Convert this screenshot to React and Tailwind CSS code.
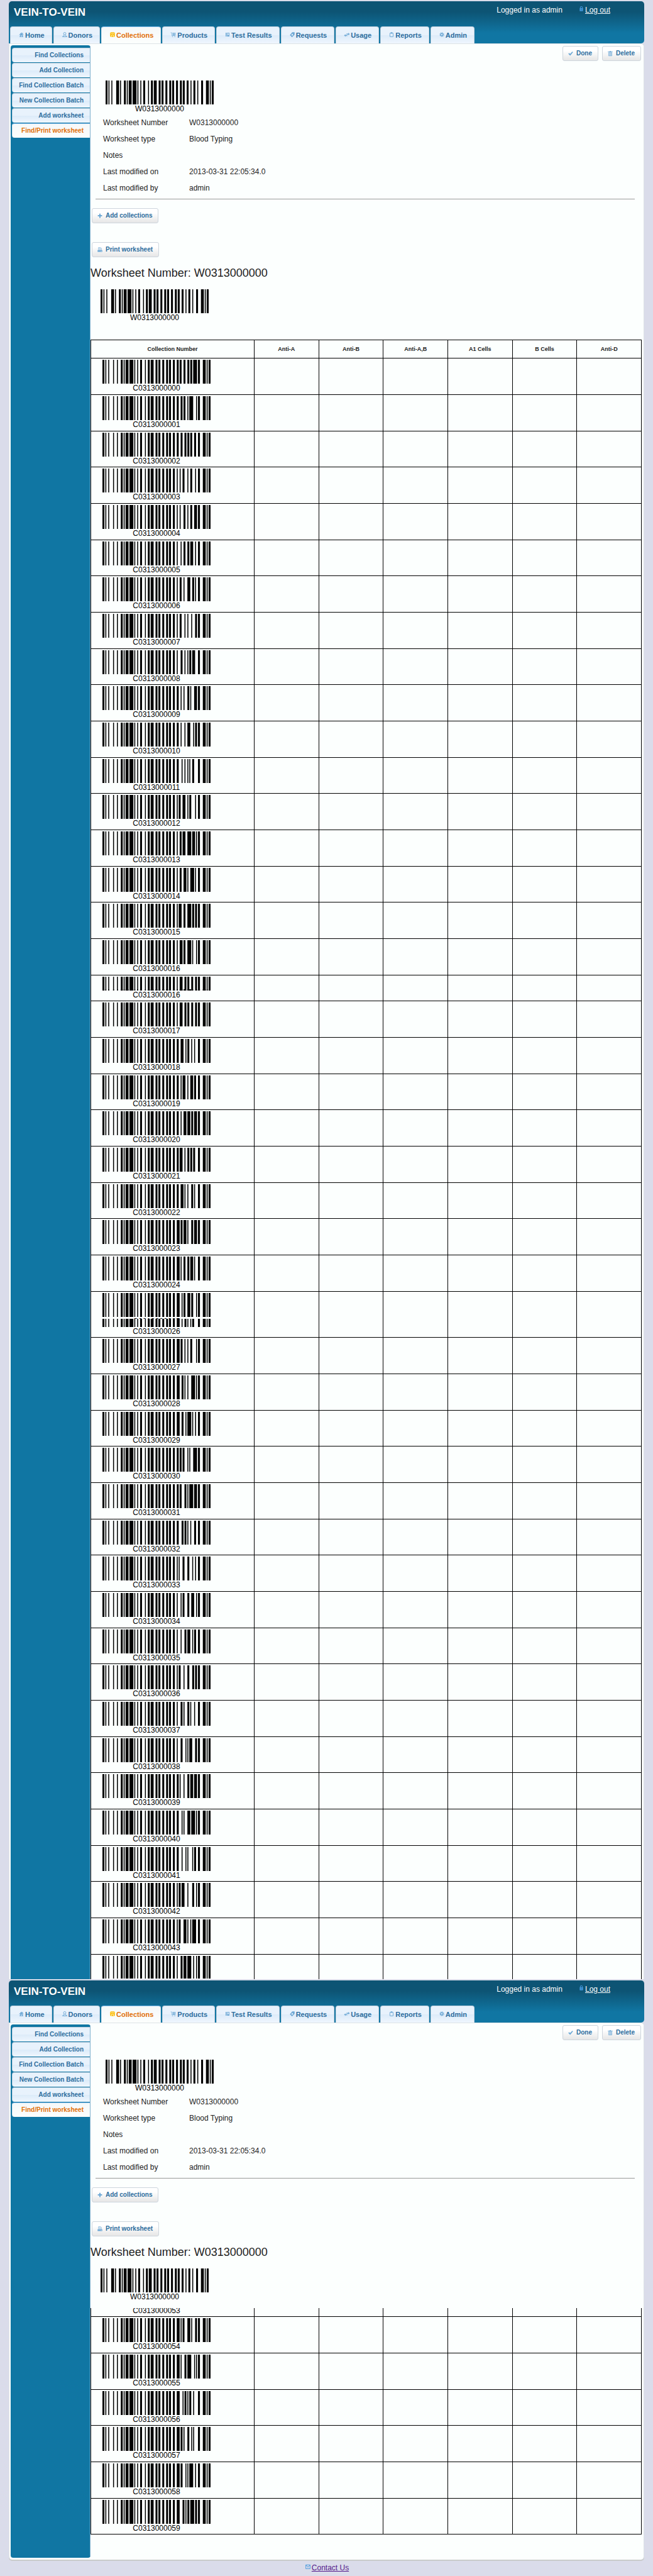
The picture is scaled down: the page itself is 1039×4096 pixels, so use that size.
import React from "react";

const CODE128 = (
  "212222,222122,222221,121223,121322,131222,122213,122312,132212,221213," +
  "221312,231212,112232,122132,122231,113222,123122,123221,223211,221132," +
  "221231,213212,223112,312131,311222,321122,321221,312212,322112,322211," +
  "212123,212321,232121,111323,131123,131321,112313,132113,132311,211313," +
  "231113,231311,112133,112331,132131,113123,113321,133121,313121,211331," +
  "231131,213113,213311,213131,311123,311321,331121,312113,312311,332111," +
  "314111,221411,431111,111224,111422,121124,121421,141122,141221,112214," +
  "112412,122114,122411,142112,142211,241211,221114,413111,241112,134111," +
  "111242,121142,121241,114212,124112,124211,411212,421112,421211,212141," +
  "214121,412121,111143,111341,131141,114113,114311,411113,411311,113141," +
  "114131,311141,411131,211412,211214,211232,2331112"
).split(",");

// Code 128: start B, one letter, switch to set C, five digit pairs, checksum, stop.
function barPath(code) {
  const pairs = code.slice(1).match(/../g).map(Number);
  const values = [104, code.charCodeAt(0) - 32, 99, ...pairs];
  const sum = values.reduce((acc, v, i) => acc + v * (i || 1), 0);
  const widths = [...values, sum % 103, 106].map((v) => CODE128[v]).join("");
  let x = 0;
  let d = "";
  [...widths].forEach((w, i) => {
    if (i % 2 === 0) d += `M${x} 0h${w}v10h-${w}z`;
    x += Number(w);
  });
  return d;
}

const code = (n) => "C03130000" + String(n).padStart(2, "0");

function Bars({ codes, className }) {
  return (
    <svg viewBox="0 0 112 10" preserveAspectRatio="none" className={"block w-[172px] " + className} aria-hidden="true">
      {codes.map((c) => (
        <path key={c} d={barPath(c)} fill="#000" />
      ))}
    </svg>
  );
}

function Caption({ children }) {
  return <div className="w-[172px] text-center text-[12px] leading-[14px] text-black">{children}</div>;
}

function Barcode({ value }) {
  return (
    <div>
      <Bars codes={[value]} className="h-[38px]" />
      <Caption>{value}</Caption>
    </div>
  );
}

const ICONS = {
  home: (
    <>
      <path d="M3.5 8.5 8 4l4.500 4.500M10.500 4v2.500" fill="none" stroke="currentColor" strokeWidth="1.200" />
      <path d="M5 8l3-3 3 3v5H9V9.500H7V13H5z" />
      <path d="M4 12.500h8" stroke="currentColor" />
    </>
  ),
  person: (
    <>
      <circle cx="8" cy="6" r="2.600" fill="none" stroke="currentColor" strokeWidth="1.200" />
      <path d="M6.500 8.500v1.500L3.500 12M9.500 8.500v1.500l3 2M3 12.500h10" fill="none" stroke="currentColor" strokeWidth="1.300" />
    </>
  ),
  disk: (
    <>
      <path d="M4.500 3h7L13 4.500v7L11.500 13h-7L3 11.500v-7z" />
      <path d="M4.500 5.500h7M6 13V9h4v4" stroke="#fff" strokeWidth="1" fill="none" opacity=".85" />
    </>
  ),
  cart: (
    <>
      <path d="M2 4h2.500v6H12M6 5h7M6 7h7M6 9h6.500M7 4v6M9 4v6M11 4v6" fill="none" stroke="currentColor" strokeWidth=".9" />
      <path d="M5 11.500h2v1.500H5zM10 11.500h2v1.500h-2z" />
    </>
  ),
  book: <path d="M4 4h2v8H4zM7 4h5v8H7zM8.300 5v4.600l1.100-1 1.100 1V5z" fillRule="evenodd" />,
  tag: <path d="M8 3h5v5l-5.500 5.500L3 9zM8 6 6 8.500 8 10.500 10 8z" fillRule="evenodd" />,
  transfer: (
    <>
      <path d="M7 6h4V4l3 3-3 2.500V8H7z" />
      <path d="M9 11H5v1.500L2 9.500 5 7v2h4z" />
    </>
  ),
  clipboard: (
    <>
      <rect x="4.600" y="4.600" width="6.800" height="8" rx=".6" fill="none" stroke="currentColor" strokeWidth="1.200" />
      <path d="M6 3.500h1L7.500 2.500h1L9 3.500h1V6H6z" />
    </>
  ),
  gear: (
    <>
      <circle cx="8" cy="8" r="2.500" fill="none" stroke="currentColor" strokeWidth="2" />
      <circle cx="8" cy="8" r="4.200" fill="none" stroke="currentColor" strokeWidth="1.400" strokeDasharray="1.650 1.650" />
    </>
  ),
  lock: (
    <>
      <path d="M5.800 7V5.500a2.200 2.200 0 0 1 4.400 0V7" fill="none" stroke="currentColor" strokeWidth="1.500" />
      <path d="M4.500 6.500h7V13h-7zM7.500 8.500v2.500h1V8.500z" fillRule="evenodd" />
    </>
  ),
  check: <path d="M3 8.500 4.800 7l1.900 2 4.800-5L13 5.200 6.900 12.500z" />,
  trash: (
    <>
      <path d="M6.500 3h3v1H13v1.300H3V4h3.500z" />
      <path d="M4.600 6.500h6.800V13H4.600zM6.500 7v5.500M8 7v5.500M9.500 7v5.500" fill="none" stroke="currentColor" />
    </>
  ),
  plus: <path d="M6.700 3.500h2.600v3.200h3.200v2.600H9.300v3.200H6.700V9.300H3.500V6.700h3.200z" />,
  print: (
    <>
      <path d="M5 9V3.500h4.500L11 5v4M6.500 6h3M6.500 8h3" fill="none" stroke="currentColor" />
      <path d="M3 9h10v3.500H3zM10 10.500v1h1.500v-1z" fillRule="evenodd" />
    </>
  ),
  mail: <path d="M3.500 4.500h9v8h-9zM3.500 4.500 8 9.500l4.500-5" fill="none" stroke="currentColor" strokeWidth="1.200" />,
};

function Icon({ name, className = "" }) {
  return (
    <svg viewBox="0 0 16 16" fill="currentColor" className={"size-3 shrink-0 " + className} aria-hidden="true">
      {ICONS[name]}
    </svg>
  );
}

const TABS = [
  ["Home", "home"],
  ["Donors", "person"],
  ["Collections", "disk"],
  ["Products", "cart"],
  ["Test Results", "book"],
  ["Requests", "tag"],
  ["Usage", "transfer"],
  ["Reports", "clipboard"],
  ["Admin", "gear"],
];

const SIDE = [
  "Find Collections",
  "Add Collection",
  "Find Collection Batch",
  "New Collection Batch",
  "Add worksheet",
  "Find/Print worksheet",
];

const IDLE =
  "border-[#c5d3e0] bg-linear-to-b from-[#e8f2fc] from-50% via-[#dcebf9] via-50% to-[#eff6fe] text-[#2e6e9e]";
const ACTIVE = "border-t-[#79b7e7] border-x-[#dbe6ee] bg-linear-to-b from-[#f5f8f9] to-[#fcfefd] text-[#e17009]";

function Header() {
  return (
    <header className="flex h-[67px] flex-col justify-between rounded-t-[5px] rounded-br-[5px] bg-linear-to-b from-[#0d5474] from-25% to-[#1076a3] to-75%">
      <div className="flex items-start justify-between pr-[54px] pl-2 text-white">
        <h1 className="pt-2 text-[17px] leading-5 font-bold">VEIN-TO-VEIN</h1>
        <div className="flex gap-6 pt-1.5 text-[12px] leading-4">
          <span>Logged in as admin</span>
          <a href="#logout" className="flex">
            <Icon name="lock" className="text-[#4296dc]" />
            <span className="underline">Log out</span>
          </a>
        </div>
      </div>
      <nav className="flex gap-0.5 pl-0.5">
        {TABS.map(([label, icon]) => {
          const on = label === "Collections";
          return (
            <a
              key={label}
              href="#tab"
              className={
                "flex h-[27px] rounded-t-[4px] border border-b-0 px-[11px] pt-1.5 text-[11px] leading-[14px] font-bold whitespace-nowrap " +
                (on ? ACTIVE : IDLE)
              }
            >
              <Icon name={icon} className={on ? "text-[#fcbe0a]" : "text-[#6da8d5]"} />
              {label}
            </a>
          );
        })}
      </nav>
    </header>
  );
}

function Sidebar() {
  return (
    <aside className="w-[127px] shrink-0 border-r border-[#7fb0cd] bg-[#1076a3] pt-1 pl-0.5">
      <nav className="flex flex-col gap-px">
        {SIDE.map((label) => {
          const on = label === "Find/Print worksheet";
          return (
            <a
              key={label}
              href="#side"
              className={
                "h-[23px] rounded-l-[4px] border border-r-0 border-b-0 pr-2.5 text-right text-[10px] leading-[22px] font-bold whitespace-nowrap " +
                (on ? ACTIVE : IDLE)
              }
            >
              {label}
            </a>
          );
        })}
      </nav>
    </aside>
  );
}

function Button({ icon, children }) {
  return (
    <button
      type="button"
      className="flex h-6 items-center gap-[3px] rounded-[3px] border border-[#cdd5dd] bg-linear-to-b from-white from-30% to-[#e6e6e6] pr-[9px] pl-1.5 text-[10px] leading-3 font-bold whitespace-nowrap text-[#2e6e9e]"
    >
      <Icon name={icon} className="text-[#6da8d5]" />
      {children}
    </button>
  );
}

const DETAILS = [
  ["Worksheet Number", "W0313000000"],
  ["Worksheet type", "Blood Typing"],
  ["Notes", ""],
  ["Last modified on", "2013-03-31 22:05:34.0"],
  ["Last modified by", "admin"],
];

const COLUMNS = ["Anti-A", "Anti-B", "Anti-A,B", "A1 Cells", "B Cells", "Anti-D"];

function Row({ height, edge = "border-y", children }) {
  return (
    <tr className={height}>
      <td className={"border-x border-black p-0 align-top " + edge}>{children}</td>
      {COLUMNS.map((c) => (
        <td key={c} className={"border-x border-black p-0 " + edge} />
      ))}
    </tr>
  );
}

function codeRows(from, to) {
  const rows = [];
  for (let n = from; n <= to; n++) {
    rows.push(
      <Row key={n} height={(n - from) % 3 === 2 ? "h-[57px]" : "h-[58px]"}>
        <div className="pt-0.5 pl-[18px]">
          <Barcode value={code(n)} />
        </div>
      </Row>
    );
  }
  return rows;
}

function Grid({ head, children }) {
  return (
    <table className="w-[calc(100%-3px)] table-fixed border-collapse">
      <colgroup>
        <col className="w-[260px]" />
        {COLUMNS.map((c) => (
          <col key={c} />
        ))}
      </colgroup>
      {head && (
        <thead>
          <tr className="h-[29px] text-[9px] leading-3 text-[#222]">
            <th className="border border-black p-0 font-bold">Collection Number</th>
            {COLUMNS.map((c) => (
              <th key={c} className="border border-black p-0 font-bold">
                {c}
              </th>
            ))}
          </tr>
        </thead>
      )}
      <tbody>{children}</tbody>
    </table>
  );
}

function Sheet({ last, children }) {
  return (
    <section className="pt-0.5">
      <Header />
      <div
        className={
          "flex rounded-tr-[5px] border border-b-0 border-[#dde3e6] bg-[#fcfffe] pl-0.5 " +
          (last ? "rounded-b-[5px] pb-[3px] shadow-[0_2px_0_#c9cbcb]" : "")
        }
      >
        <div className={"flex overflow-hidden pt-0.5 " + (last ? "rounded-b-[4px]" : "")}>
          <div className="flex overflow-hidden rounded-t-[4px]">
            <Sidebar />
          </div>
        </div>
        <main className="min-w-0 flex-1 text-[12px] text-[#222]">
          <div className="flex justify-end gap-1.5 pt-[3px] pr-1">
            <Button icon="check">Done</Button>
            <Button icon="trash">Delete</Button>
          </div>
          <div className="mt-[31px] mr-[14px] ml-2 border-b border-[#999] pb-1">
            <div className="pl-4">
              <Barcode value="W0313000000" />
            </div>
            <dl className="mt-0.5 pl-3">
              {DETAILS.map(([k, v]) => (
                <div key={k} className="flex h-[26px] items-center leading-4">
                  <dt className="w-[137px]">{k}</dt>
                  <dd>{v}</dd>
                </div>
              ))}
            </dl>
          </div>
          <div className="mt-[14px] flex flex-col items-start gap-[30px] pl-0.5">
            <Button icon="plus">Add collections</Button>
            <Button icon="print">Print worksheet</Button>
          </div>
          <h2 className="mt-[13px] text-[18px] leading-6">Worksheet Number: W0313000000</h2>
          <div className={"mt-[14px] pl-4 " + (last ? "mb-[11px]" : "mb-7")}>
            <Barcode value="W0313000000" />
          </div>
          {children}
        </main>
      </div>
    </section>
  );
}

export default function App() {
  return (
    <div className="bg-[#dadcea] px-[14px] font-['Liberation_Sans',Arial,sans-serif]">
      <Sheet>
        <Grid head>
          {codeRows(0, 16)}
          <Row height="h-[41px]">
            <div className="pt-0.5 pl-[18px]">
              <Bars codes={[code(17)]} className="h-5" />
              <Bars codes={[code(17), code(16)]} className="h-0.5" />
              <Caption>{code(16)}</Caption>
            </div>
          </Row>
          {codeRows(17, 24)}
          <Row height="h-[73px]">
            <div className="pt-0.5 pl-[18px]">
              <Bars codes={[code(25)]} className="h-[38px]" />
              <div className="h-[3px] overflow-hidden">
                <Caption>{code(25)}</Caption>
              </div>
              <Bars codes={[code(26)]} className="h-[13px]" />
              <Caption>{code(26)}</Caption>
            </div>
          </Row>
          {codeRows(27, 43)}
          <Row height="h-[39px]" edge="border-t">
            <div className="pt-0.5 pl-[18px]">
              <Bars codes={[code(44)]} className="h-9" />
            </div>
          </Row>
        </Grid>
      </Sheet>
      <Sheet last>
        <Grid>
          <Row height="h-[14px]" edge="border-b">
            <div className="flex h-[13px] items-end overflow-hidden pb-0.5 pl-[18px]">
              <Caption>{code(53)}</Caption>
            </div>
          </Row>
          {codeRows(54, 59)}
        </Grid>
        <div className="h-[37px]" />
      </Sheet>
      <footer className="flex h-[26px] items-center justify-center text-[12px] leading-4">
        <a href="#contact" className="flex text-[#551a8b]">
          <Icon name="mail" className="text-[#4296dc]" />
          <span className="underline">Contact Us</span>
        </a>
      </footer>
    </div>
  );
}
